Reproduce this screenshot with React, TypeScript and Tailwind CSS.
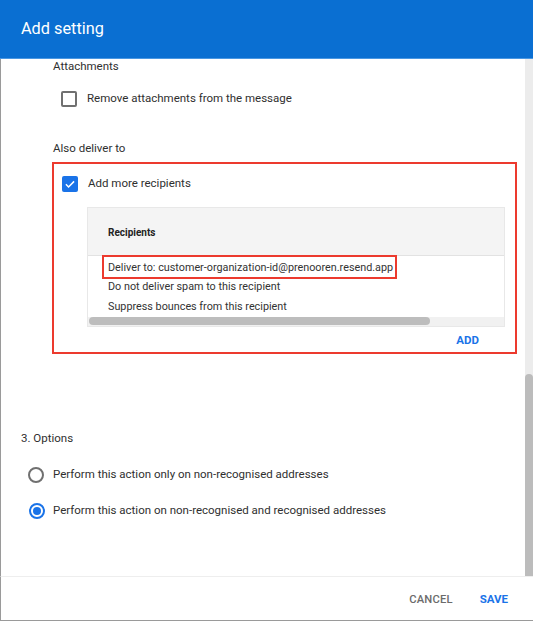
import React from "react";

const font = { fontFamily: "Roboto, 'Noto Sans', Arial, sans-serif" };

function Checkbox({ checked }: { checked?: boolean }) {
  if (checked) {
    return (
      <div className="w-[16px] h-[16px] rounded-[2px] bg-[#1a73e8] flex items-center justify-center shrink-0">
        <svg viewBox="0 0 24 24" className="w-[14px] h-[14px]" fill="none" stroke="white" strokeWidth={2.6}>
          <path d="M5 12.5l4.5 4.5L19 7.5" />
        </svg>
      </div>
    );
  }
  return <div className="w-[16px] h-[16px] rounded-[2px] border-2 border-[#707070] shrink-0" />;
}

function Radio({ checked }: { checked?: boolean }) {
  return (
    <div className={`w-[16px] h-[16px] rounded-full border-2 flex items-center justify-center shrink-0 ${checked ? "border-[#1a73e8]" : "border-[#707070]"}`}>
      {checked && <div className="w-[8px] h-[8px] rounded-full bg-[#1a73e8]" />}
    </div>
  );
}

export default function App() {
  return (
    <div className="w-[533px] h-[621px] overflow-hidden bg-white flex flex-col text-[#2f2f2f]" style={font}>
      {/* Header */}
      <div className="h-[59px] shrink-0 bg-[#0a6fd2] border-b border-[#4a97e2] flex items-center pl-[21px]">
        <h1 className="text-white text-[16.3px] leading-none">Add setting</h1>
      </div>

      {/* Body */}
      <div className="flex-1 flex min-h-0 border-l border-[#9a9a9a]">
        <div className="flex-1 overflow-hidden">
          <div className="ml-[52px] text-[11.5px] leading-[12px] pt-[1px]">Attachments</div>
          <div className="mt-[17px] ml-[60px] h-[20px] flex items-center gap-[10px]">
            <Checkbox />
            <span className="text-[11.5px]">Remove attachments from the message</span>
          </div>

          <div className="mt-[31px] ml-[52px] text-[11.5px] leading-4">Also deliver to</div>

          <div className="mt-[6px] ml-[51px] w-[465px] border-2 border-[#ec3a2e] pt-[10px] pb-[4px]">
            <div className="ml-[8px] h-[20px] flex items-center gap-[10px]">
              <Checkbox checked />
              <span className="text-[11.5px]">Add more recipients</span>
            </div>

            <div className="mt-[13px] ml-[33px] w-[418px] border border-[#e8e8e8]">
              <div className="h-[48px] bg-[#f4f4f4] border-b border-[#e2e2e2] flex items-center pl-[20px] pt-[2px]">
                <span className="text-[10px] font-bold text-[#222]">Recipients</span>
              </div>
              <div className="pt-[2px] text-[10.8px] text-[#333]">
                <div className="h-[19.5px] flex items-center pl-[20px]">
                  <span className="relative">
                    Deliver to: customer-organization-id@prenooren.resend.app
                    <span className="absolute -left-[6px] -right-[4px] -top-[5px] -bottom-[3px] border-2 border-[#ec3a2e]" />
                  </span>
                </div>
                <div className="h-[19.5px] flex items-center pl-[20px]">Do not deliver spam to this recipient</div>
                <div className="h-[19.5px] flex items-center pl-[20px]">Suppress bounces from this recipient</div>
              </div>
              <div className="h-[9px] bg-[#f1f1f1] flex items-center">
                <div className="ml-[1px] w-[341px] h-[8px] rounded-full bg-[#bdbdbd]" />
              </div>
            </div>

            <div className="mt-[5px] flex justify-end pr-[36px]">
              <span className="text-[11.5px] leading-4 font-bold text-[#1a73e8]">ADD</span>
            </div>
          </div>

          <div className="mt-[76px] ml-[20px] text-[11.5px] leading-4">3. Options</div>
          <div className="mt-[19px] ml-[27px] h-[20px] flex items-center gap-[9px]">
            <Radio />
            <span className="text-[11.5px]">Perform this action only on non-recognised addresses</span>
          </div>
          <div className="mt-[16px] ml-[28px] h-[20px] flex items-center gap-[8px]">
            <Radio checked />
            <span className="text-[11.5px]">Perform this action on non-recognised and recognised addresses</span>
          </div>
        </div>

        {/* Scrollbar */}
        <div className="w-[8px] bg-[#ececec] flex flex-col justify-end">
          <div className="h-[202px] bg-[#bcbcbc] rounded-t-full" />
        </div>
      </div>

      {/* Footer */}
      <div className="h-[45px] shrink-0 border-t border-[#eeeeee] border-l border-b border-l-[#9a9a9a] border-b-[#9a9a9a] flex items-center justify-end gap-[27px] pr-[25px] pt-[3px]">
        <span className="text-[11.2px] font-medium text-[#6b6b6b] tracking-[0.2px]">CANCEL</span>
        <span className="text-[11.5px] font-bold text-[#1a73e8]">SAVE</span>
      </div>
    </div>
  );
}
